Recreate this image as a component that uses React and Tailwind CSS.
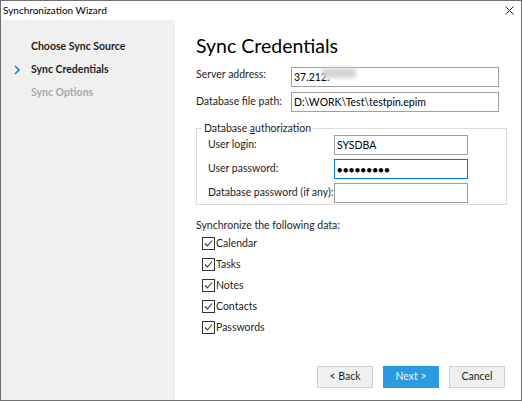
import { useState } from 'react';

const font = { fontFamily: 'Lato, "Noto Sans", sans-serif' };

function Field({ label, value, focused, dots }) {
  return (
    <div className="flex h-[20px] items-center">
      <label className="w-[126px] shrink-0 whitespace-nowrap text-[10.5px] text-[#1e1e1e]">{label}</label>
      <input
        type="text"
        defaultValue={value}
        className={
          'h-[20px] w-[134px] border bg-white px-[2px] text-black outline-none ' +
          (dots ? 'text-[9px] tracking-[0.5px] ' : 'text-[10.5px] ') +
          (focused ? 'border-[#0078d7]' : 'border-[#a0a0a0]')
        }
      />
    </div>
  );
}

function Check({ label }) {
  const [on, setOn] = useState(true);
  return (
    <label className="flex h-[21px] items-center gap-[1px] text-[10.5px] text-[#1e1e1e]">
      <span
        onClick={() => setOn(!on)}
        className="flex h-[13px] w-[13px] items-center justify-center border border-[#333] bg-white"
      >
        {on && (
          <svg width="9" height="9" viewBox="0 0 9 9">
            <path d="M1 4.5 L3.5 7 L8 1.5" fill="none" stroke="#333" strokeWidth="1.1" />
          </svg>
        )}
      </span>
      {label}
    </label>
  );
}

export default function App() {
  return (
    <div style={font} className="flex h-[401px] w-[522px] flex-col border border-[#707070] bg-white">
      <div className="flex h-[19px] shrink-0 items-center justify-between pl-[2px] pr-[7px]">
        <span className="text-[10px] text-black">Synchronization Wizard</span>
        <svg width="9" height="9" viewBox="0 0 9 9">
          <path d="M0.5 0.5 L8.5 8.5 M8.5 0.5 L0.5 8.5" stroke="#222" strokeWidth="1" />
        </svg>
      </div>

      <div className="flex flex-1">
        <aside className="w-[174px] shrink-0 bg-[#f0f0f0] pt-[15px] text-[10.5px] font-bold">
          <div className="flex h-[23px] items-center pl-[30px] text-[#1e1e1e]">Choose Sync Source</div>
          <div className="relative flex h-[23px] items-center pl-[30px] text-[#1e1e1e]">
            <svg className="absolute left-[13px]" width="7" height="10" viewBox="0 0 7 10">
              <path d="M1 1 L5 5 L1 9" fill="none" stroke="#2a7fd4" strokeWidth="1.6" />
            </svg>
            Sync Credentials
          </div>
          <div className="flex h-[23px] items-center pl-[30px] text-[#a8a8a8]">Sync Options</div>
        </aside>

        <main className="flex flex-1 flex-col pl-[21px] pr-[14px]">
          <h1 className="mt-[12px] h-[27px] text-[19.5px] leading-[27px] text-black">Sync Credentials</h1>

          <div className="mt-[6px] flex flex-col gap-[7px]">
            <div className="flex h-[20px] items-center">
              <label className="w-[95px] shrink-0 whitespace-nowrap text-[10.5px] text-[#1e1e1e]">Server address:</label>
              <div className="relative">
                <input
                  defaultValue="37.212."
                  className="h-[20px] w-[208px] border border-[#a0a0a0] px-[2px] text-[10.5px] outline-none"
                />
                <span className="absolute left-[31px] top-[5px] h-[10px] w-[34px] bg-[#d4d4d4] blur-[2px]" />
              </div>
            </div>
            <div className="flex h-[20px] items-center">
              <label className="w-[95px] shrink-0 whitespace-nowrap text-[10.5px] text-[#1e1e1e]">Database file path:</label>
              <input
                defaultValue="D:\WORK\Test\testpin.epim"
                className="h-[20px] w-[208px] border border-[#a0a0a0] px-[2px] text-[10.5px] outline-none"
              />
            </div>
          </div>

          <fieldset className="mt-[9px] w-[311px] border border-[#dcdcdc] pb-[1px]">
            <legend className="ml-[5px] px-[2px] text-[10.5px] leading-[14px] text-[#1e1e1e]">
              Database <span className="underline">a</span>uthorization
            </legend>
            <div className="flex flex-col gap-[4px] pl-[11px]">
              <Field label="User login:" value="SYSDBA" />
              <Field label="User password:" value="●●●●●●●●●" dots focused />
              <Field label="Database password (if any):" value="" />
            </div>
          </fieldset>

          <div className="mt-[12px] h-[16px] text-[10.5px] leading-[16px] text-[#1e1e1e]">Synchronize the following data:</div>
          <div className="flex flex-col pl-[6px]">
            <Check label="Calendar" />
            <Check label="Tasks" />
            <Check label="Notes" />
            <Check label="Contacts" />
            <Check label="Passwords" />
          </div>

          <div className="mt-auto mb-[12px] flex justify-end gap-[10px] pr-[2px]">
            <button className="h-[22px] w-[56px] border border-[#d0d0d0] bg-[#f0f0f0] text-[10.5px] text-[#1e1e1e]">
              &lt; Back
            </button>
            <button className="h-[22px] w-[56px] border border-[#2b9ae0] bg-[#2b9ae0] text-[10.5px] text-[#e8f4fc]">
              Next &gt;
            </button>
            <button className="h-[22px] w-[56px] border border-[#d0d0d0] bg-[#f0f0f0] text-[10.5px] text-[#1e1e1e]">
              Cancel
            </button>
          </div>
        </main>
      </div>
    </div>
  );
}
